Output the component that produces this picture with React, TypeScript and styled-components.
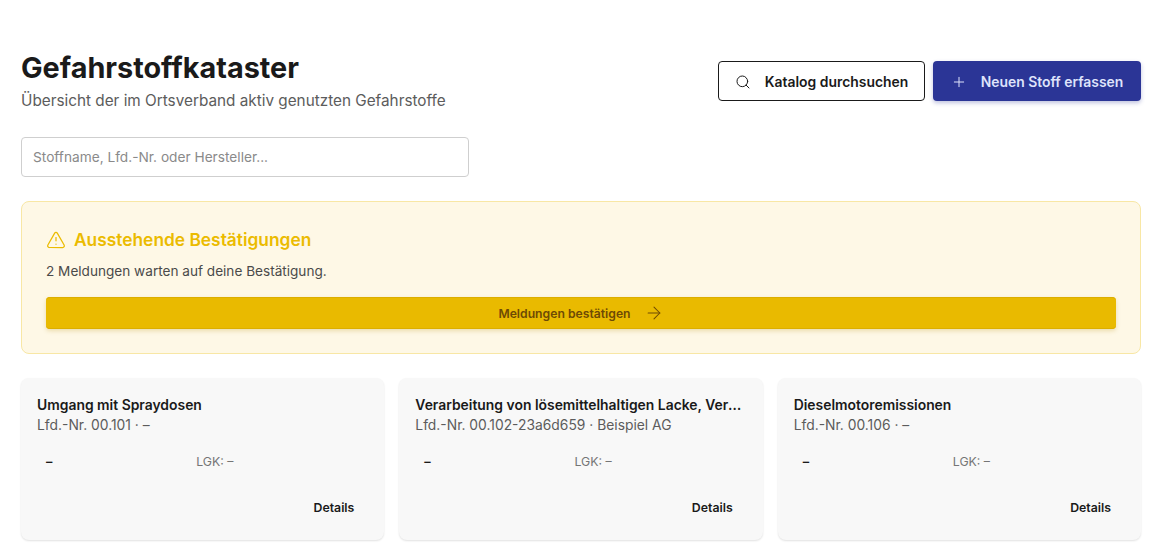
import React from "react";
import styled, { createGlobalStyle } from "styled-components";
import { Search, Plus, TriangleAlert, ArrowRight } from "lucide-react";

const Global = createGlobalStyle`
  html, body { margin: 0; padding: 0; background: #fff; }
  body { font-family: Inter, "Liberation Sans", sans-serif; color: #1a1a1a; overflow: hidden; }
  * { box-sizing: border-box; }
`;

const Page = styled.main`
  display: flex;
  flex-direction: column;
  height: 554px;
  overflow: hidden;
  padding: 48px 35px 0 21px;
`;

const Header = styled.header`
  display: flex;
  justify-content: space-between;
  align-items: flex-start;
`;

const TitleBlock = styled.div`
  display: flex;
  flex-direction: column;
`;

const Title = styled.h1`
  margin: 1px 0 0;
  font-size: 28.8px;
  line-height: 38px;
  font-weight: 700;
  color: #1a1a1a;
`;

const Subtitle = styled.p`
  margin: 3px 0 0;
  font-size: 15.3px;
  line-height: 22px;
  color: #5c5c5c;
`;

const Actions = styled.div`
  display: flex;
  gap: 8px;
  margin-top: 13px;
`;

const Button = styled.button<{ $primary?: boolean }>`
  display: flex;
  align-items: center;
  justify-content: center;
  gap: 14px;
  height: 40px;
  padding: 2px 0 0;
  border-radius: 4px;
  font: 600 13.9px Inter, sans-serif;
  white-space: nowrap;
  border: ${(p) => (p.$primary ? "none" : "1px solid #1a1a1a")};
  background: ${(p) => (p.$primary ? "#2b3596" : "#fff")};
  color: ${(p) => (p.$primary ? "#dfe3fb" : "#1a1a1a")};
  box-shadow: ${(p) => (p.$primary ? "0 2px 4px rgba(43,53,150,0.3)" : "none")};
  width: ${(p) => (p.$primary ? "208px" : "207px")};
`;

const SearchInput = styled.input`
  display: block;
  width: 448px;
  height: 40px;
  margin-top: 25px;
  padding: 0 11px;
  border: 1px solid #cfcfcf;
  border-radius: 4px;
  font: 400 13.7px Inter, sans-serif;
  background: #fff;
  &::placeholder { color: #8a8a8a; opacity: 1; }
`;

const Alert = styled.section`
  display: flex;
  flex-direction: column;
  margin-top: 24px;
  height: 153px;
  padding: 24px;
  background: #fef8e6;
  border: 1px solid #f8e7a5;
  border-radius: 8px;
`;

const AlertTitle = styled.h2`
  display: flex;
  align-items: center;
  gap: 8px;
  margin: 0;
  font-size: 17.35px;
  line-height: 28px;
  font-weight: 600;
  color: #ebbb00;
`;

const AlertText = styled.p`
  margin: 7px 0 0;
  font-size: 13.6px;
  line-height: 20px;
  color: #4a4a4a;
`;

const ConfirmButton = styled.button`
  display: flex;
  align-items: center;
  justify-content: center;
  gap: 13px;
  height: 32px;
  margin-top: 16px;
  border: none;
  border-radius: 4px;
  background: #e9ba00;
  color: #6e4a05;
  font: 600 12.2px Inter, sans-serif;
  box-shadow: 0 2px 4px rgba(180,140,0,0.25), inset 0 1px 0 #dcae00, inset 0 -1px 0 #dcae00;
`;

const Grid = styled.div`
  display: grid;
  grid-template-columns: repeat(3, minmax(0, 1fr));
  gap: 15px;
  margin-top: 24px;
`;

const Card = styled.article`
  display: flex;
  flex-direction: column;
  min-width: 0;
  height: 162px;
  padding: 17px 16px 16px;
  background: #f8f8f8;
  border-radius: 8px;
  box-shadow: 0 1px 2px rgba(0,0,0,0.12);
`;

const CardTitle = styled.h3`
  margin: 0;
  font-size: 13.9px;
  line-height: 20px;
  font-weight: 600;
  color: #1a1a1a;
  white-space: nowrap;
  overflow: hidden;
  text-overflow: ellipsis;
`;

const CardMeta = styled.p`
  margin: 0;
  font-size: 13.85px;
  line-height: 20px;
  color: #5c5c5c;
`;

const CardInfo = styled.div`
  display: grid;
  grid-template-columns: 1fr 1fr;
  margin-top: 16px;
  padding: 0 22px 0 9px;
  align-items: center;
  height: 20px;
`;

const Dash = styled.span`
  font-size: 12.8px;
  font-weight: 600;
  color: #1a1a1a;
`;

const Lgk = styled.span`
  font-size: 12.3px;
  color: #757575;
`;

const CardFooter = styled.div`
  display: flex;
  justify-content: flex-end;
  margin-top: 27px;
  padding-right: 14px;
`;

const DetailsLink = styled.a`
  font-size: 12.3px;
  line-height: 20px;
  font-weight: 600;
  color: #1a1a1a;
`;

const items = [
  { title: "Umgang mit Spraydosen", meta: "Lfd.-Nr. 00.101 · –" },
  { title: "Verarbeitung von lösemittelhaltigen Lacke, Verdünnungen", meta: "Lfd.-Nr. 00.102-23a6d659 · Beispiel AG" },
  { title: "Dieselmotoremissionen", meta: "Lfd.-Nr. 00.106 · –" },
];

export default function App() {
  return (
    <Page>
      <Global />
      <Header>
        <TitleBlock>
          <Title>Gefahrstoffkataster</Title>
          <Subtitle>Übersicht der im Ortsverband aktiv genutzten Gefahrstoffe</Subtitle>
        </TitleBlock>
        <Actions>
          <Button>
            <Search size={16} strokeWidth={1.5} />
            Katalog durchsuchen
          </Button>
          <Button $primary>
            <Plus size={16} strokeWidth={1.5} />
            Neuen Stoff erfassen
          </Button>
        </Actions>
      </Header>
      <SearchInput placeholder="Stoffname, Lfd.-Nr. oder Hersteller..." />
      <Alert>
        <AlertTitle>
          <TriangleAlert size={20} strokeWidth={1.5} />
          Ausstehende Bestätigungen
        </AlertTitle>
        <AlertText>2 Meldungen warten auf deine Bestätigung.</AlertText>
        <ConfirmButton>
          Meldungen bestätigen
          <ArrowRight size={20} strokeWidth={1.25} />
        </ConfirmButton>
      </Alert>
      <Grid>
        {items.map((it) => (
          <Card key={it.meta}>
            <CardTitle>{it.title}</CardTitle>
            <CardMeta>{it.meta}</CardMeta>
            <CardInfo>
              <Dash>–</Dash>
              <Lgk>LGK: –</Lgk>
            </CardInfo>
            <CardFooter>
              <DetailsLink>Details</DetailsLink>
            </CardFooter>
          </Card>
        ))}
      </Grid>
    </Page>
  );
}
